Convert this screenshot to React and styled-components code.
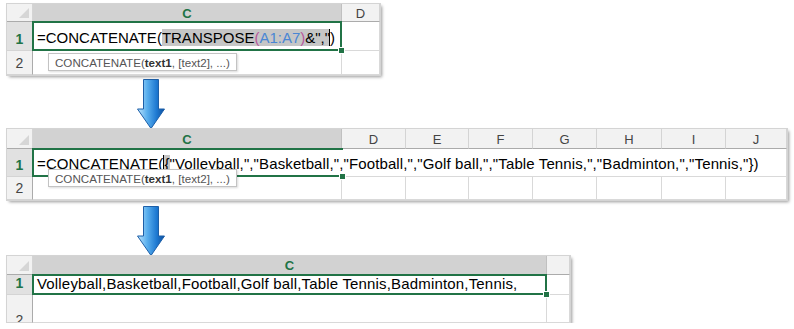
import React from "react";
import styled, { createGlobalStyle } from "styled-components";

const GREEN = "#217346";

const GlobalStyle = createGlobalStyle`
  body {
    margin: 0;
    background: #ffffff;
    font-family: "Liberation Sans", Arial, sans-serif;
  }
`;

const Page = styled.div`
  display: flex;
  flex-direction: column;
  align-items: flex-start;
  padding: 4px 0 0 7px;
`;

const Sheet = styled.div`
  position: relative;
  display: grid;
  grid-template-columns: ${(p) => p.$cols};
  grid-template-rows: ${(p) => p.$rows};
  background: #ffffff;
  box-shadow: 0 0 0 1px #d4d4d4, 2px 2px 3px rgba(0, 0, 0, 0.4);
  overflow: hidden;
`;

const Corner = styled.div`
  position: relative;
  background: #f2f2f2;
  border-right: 1px solid #d4d4d4;
  border-bottom: 1px solid #ababab;

  &::after {
    content: "";
    position: absolute;
    right: 3px;
    bottom: 3px;
    border-style: solid;
    border-width: 0 0 10px 10px;
    border-color: transparent transparent #d6d6d6 transparent;
  }
`;

const ColHead = styled.div`
  display: flex;
  align-items: center;
  justify-content: center;
  background: ${(p) => (p.$active ? "#d2d2d2" : "#f2f2f2")};
  border-right: 1px solid ${(p) => (p.$active ? "#c0c0c0" : "#d4d4d4")};
  border-bottom: 1px solid ${(p) => (p.$active ? GREEN : "#ababab")};
  color: ${(p) => (p.$active ? GREEN : "#444444")};
  font-weight: ${(p) => (p.$active ? "bold" : "normal")};
  font-size: 13px;
  padding-top: 1px;
`;

const RowHead = styled.div`
  display: flex;
  align-items: flex-end;
  justify-content: center;
  overflow: hidden;
  background: ${(p) => (p.$active ? "#e1e1e1" : "#f2f2f2")};
  border-right: 1px solid #ababab;
  border-bottom: 1px solid #d4d4d4;
  color: ${(p) => (p.$active ? GREEN : "#444444")};
  font-weight: ${(p) => (p.$active ? "bold" : "normal")};
  font-size: 14px;
  line-height: 16px;
  padding-bottom: 3px;

  & > span {
    margin-bottom: ${(p) => -(p.$drop || 0)}px;
  }
`;

const Cell = styled.div`
  position: relative;
  display: flex;
  align-items: flex-end;
  padding-bottom: ${(p) => p.$pb ?? 3}px;
  border-right: ${(p) => (p.$noRight ? "none" : "1px solid #d9d9d9")};
  border-bottom: 1px solid #d9d9d9;
  min-width: 0;

  ${(p) =>
    p.$selected &&
    `
    z-index: 1;
    &::after {
      content: "";
      position: absolute;
      top: -1px;
      left: -1px;
      right: -1px;
      bottom: -1px;
      border: 2px solid ${GREEN};
      border-right: ${p.$open ? "none" : `2px solid ${GREEN}`};
      pointer-events: none;
    }
    &::before {
      content: "";
      position: absolute;
      right: -4px;
      bottom: -4px;
      width: 5px;
      height: 5px;
      background: ${GREEN};
      border: 1px solid #ffffff;
      z-index: 2;
    }
  `}
`;

const Formula = styled.span`
  position: relative;
  z-index: 3;
  padding-left: 4px;
  font-size: 15px;
  line-height: 17px;
  letter-spacing: ${(p) => p.$ls || 0}px;
  color: #000000;
  white-space: nowrap;
`;

const Highlight = styled.span`
  background: #c6c6c6;
`;

const RefText = styled.span`
  color: #4a86d4;
`;

const ParenText = styled.span`
  color: #b8559c;
`;

const Caret = styled.span`
  border-left: 1px solid #000000;
  margin-left: -1px;
`;

const CaretBlock = styled.span`
  background: #c6c6c6;
  border-left: 1px solid #000000;
`;

const Tooltip = styled.div`
  position: absolute;
  left: ${(p) => p.$left}px;
  top: ${(p) => p.$top}px;
  z-index: 5;
  height: 18px;
  box-sizing: border-box;
  padding: 0 6px;
  display: flex;
  align-items: center;
  background: #ffffff;
  border: 1px solid #c3c3c3;
  box-shadow: 1px 1px 2px rgba(0, 0, 0, 0.15);
  color: #555555;
  font-size: 11.6px;
  white-space: nowrap;

  & b {
    color: #333333;
  }
`;

const ArrowRow = styled.div`
  height: ${(p) => p.$h}px;
  display: flex;
  align-items: flex-end;
  padding-left: 130px;
`;

function DownArrow() {
  return (
    <svg width="28" height="50" viewBox="0 0 28 50">
      <defs>
        <linearGradient id="arrowFill" x1="0" y1="0" x2="1" y2="0">
          <stop offset="0" stopColor="#bfe4fb" />
          <stop offset="0.35" stopColor="#5bb0ee" />
          <stop offset="0.7" stopColor="#1f7ad2" />
          <stop offset="1" stopColor="#0c4f9e" />
        </linearGradient>
      </defs>
      <path
        d="M6.5 0.5 H21.5 V30 H27.5 L14 49.5 L0.5 30 H6.5 Z"
        fill="url(#arrowFill)"
        stroke="#1d5fa8"
        strokeWidth="1"
        strokeLinejoin="round"
      />
    </svg>
  );
}

function TipText() {
  return (
    <>
      CONCATENATE(<b>text1</b>, [text2], ...)
    </>
  );
}

function FirstSheet() {
  return (
    <Sheet $cols="26px 309px 38px" $rows="18px 29px 24px">
      <Corner />
      <ColHead $active>C</ColHead>
      <ColHead>D</ColHead>

      <RowHead $active>
        <span>1</span>
      </RowHead>
      <Cell $selected $pb={4}>
        <Formula>
          =CONCATENATE(
          <Highlight>
            TRANSPOSE<ParenText>(</ParenText>
            <RefText>A1:A7</RefText>
            <ParenText>)</ParenText>&amp;","
          </Highlight>
          <Caret />)
        </Formula>
      </Cell>
      <Cell />

      <RowHead>
        <span>2</span>
      </RowHead>
      <Cell />
      <Cell />

      <Tooltip $left={41} $top={49}>
        <TipText />
      </Tooltip>
    </Sheet>
  );
}

const secondCols = ["D", "E", "F", "G", "H", "I", "J"];

function SecondSheet() {
  return (
    <Sheet
      $cols="26px 309px 64px 63px 64px 64px 65px 64px 61px"
      $rows="20px 28px 23px"
    >
      <Corner />
      <ColHead $active>C</ColHead>
      {secondCols.map((c) => (
        <ColHead key={c}>{c}</ColHead>
      ))}

      <RowHead $active>
        <span>1</span>
      </RowHead>
      <Cell $selected $open $noRight $pb={4}>
        <Formula $ls={0.12}>
          =CONCATENATE(<CaretBlock>{"{"}</CaretBlock>
          "Volleyball,","Basketball,","Football,","Golf ball,","Table
          Tennis,","Badminton,","Tennis,"{"})"}
        </Formula>
      </Cell>
      {secondCols.map((c, i) => (
        <Cell key={c} $noRight={i < secondCols.length - 1} />
      ))}

      <RowHead>
        <span>2</span>
      </RowHead>
      <Cell />
      {secondCols.map((c) => (
        <Cell key={c} />
      ))}

      <Tooltip $left={41} $top={40}>
        <TipText />
      </Tooltip>
    </Sheet>
  );
}

function ThirdSheet() {
  return (
    <Sheet $cols="26px 514px 23px" $rows="19px 20px 28px">
      <Corner />
      <ColHead $active>C</ColHead>
      <ColHead />

      <RowHead $active>
        <span>1</span>
      </RowHead>
      <Cell $selected $pb={2}>
        <Formula $ls={0.17}>
          Volleyball,Basketball,Football,Golf ball,Table Tennis,Badminton,Tennis,
        </Formula>
      </Cell>
      <Cell />

      <RowHead $drop={9}>
        <span>2</span>
      </RowHead>
      <Cell />
      <Cell />
    </Sheet>
  );
}

export default function App() {
  return (
    <>
      <GlobalStyle />
      <Page>
        <FirstSheet />
        <ArrowRow $h={54}>
          <DownArrow />
        </ArrowRow>
        <SecondSheet />
        <ArrowRow $h={56}>
          <DownArrow />
        </ArrowRow>
        <ThirdSheet />
      </Page>
    </>
  );
}
